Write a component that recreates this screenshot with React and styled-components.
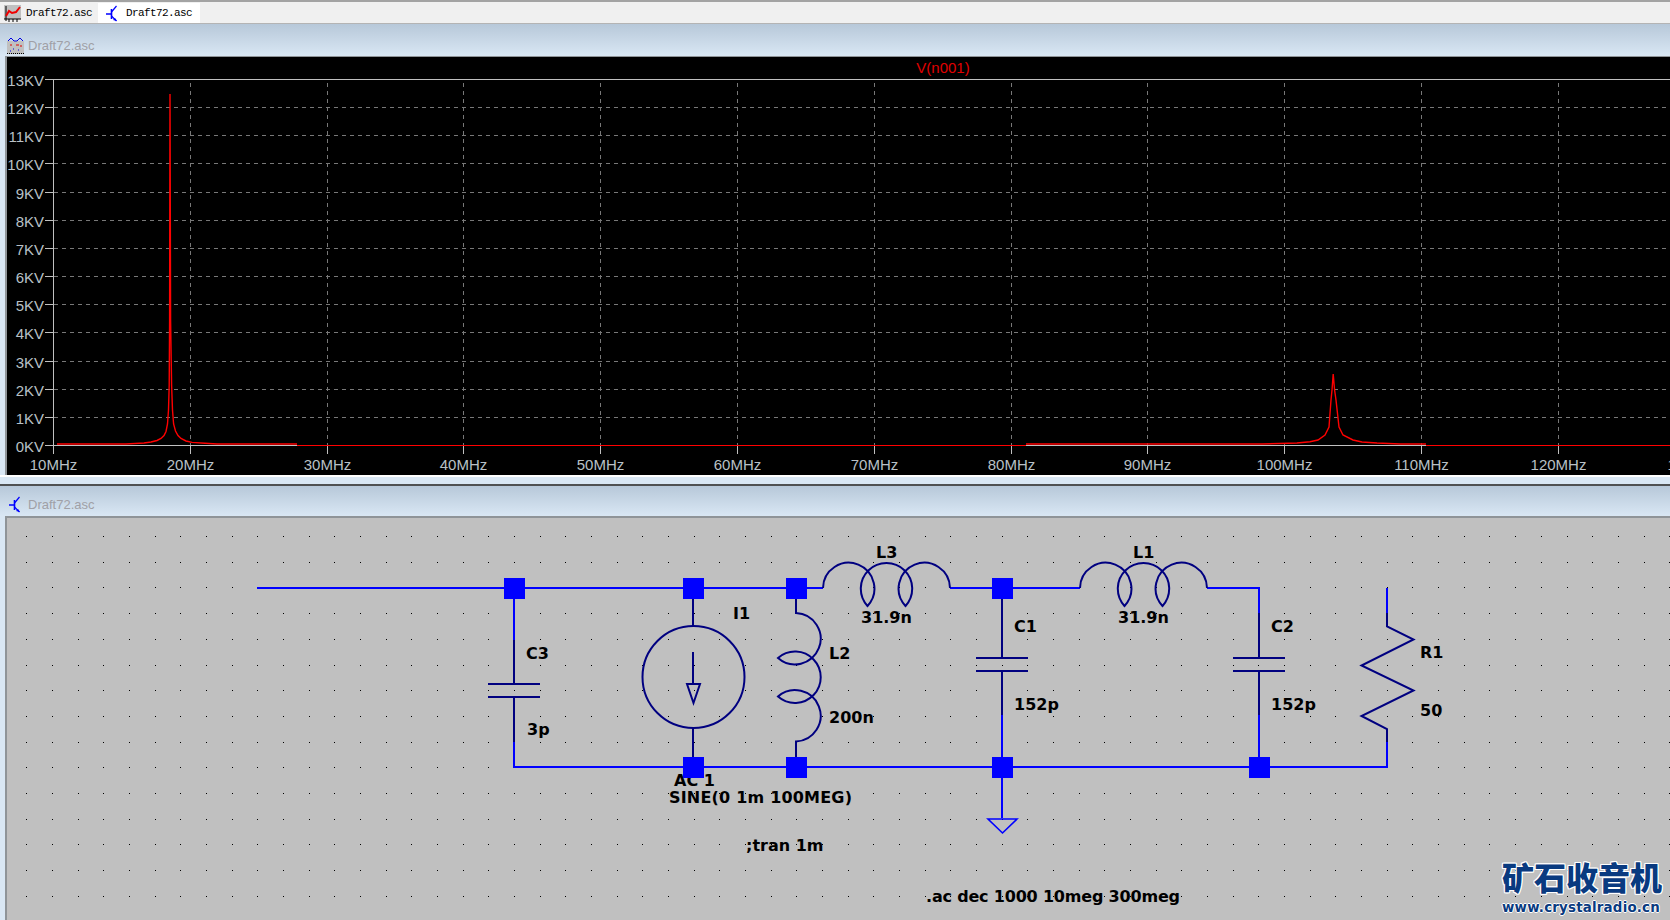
import React from 'react'
import styled, { createGlobalStyle } from 'styled-components'

const GlobalStyle = createGlobalStyle`
  html, body {
    margin: 0;
    padding: 0;
    height: 920px;
    overflow: hidden;
    background: #d9e7f4;
    font-family: "Liberation Sans", Arial, sans-serif;
  }
`

const Page = styled.div`
  display: flex;
  flex-direction: column;
  width: 1670px;
  height: 920px;
  overflow: hidden;
`

const TabBar = styled.div`
  display: flex;
  flex: none;
  align-items: stretch;
  box-sizing: border-box;
  height: 24px;
  padding-top: 1px;
  background: #f0f0f0;
  border-top: 2px solid #a3a3a3;
  border-bottom: 1px solid #b4b4b4;
`

const Tab = styled.div`
  display: flex;
  align-items: center;
  box-sizing: border-box;
  width: ${p => (p.$active ? '102px' : '98px')};
  padding-left: ${p => (p.$active ? '8px' : '4px')};
  gap: ${p => (p.$active ? '8px' : '5px')};
  background: ${p => (p.$active ? '#ffffff' : 'transparent')};
`

const TabLabel = styled.span`
  font: 11px "Liberation Mono", "DejaVu Sans Mono", monospace;
  letter-spacing: -0.6px;
  color: #000;
`

const Frame = styled.section`
  display: flex;
  flex-direction: column;
  flex: ${p => (p.$grow ? '1 1 0' : 'none')};
  min-height: 0;
  background: #d9e7f4;
`

const TitleBar = styled.div`
  display: flex;
  flex: none;
  align-items: center;
  box-sizing: border-box;
  gap: ${p => p.$gap}px;
  height: ${p => p.$height}px;
  padding: ${p => p.$pad};
  background: linear-gradient(#b7c8d9, #d9e7f4);
`

const TitleText = styled.span`
  font-size: 13px;
  color: #a0a0a6;
`

const Pane = styled.div`
  position: relative;
  box-sizing: border-box;
  height: ${p => p.$height}px;
  margin-left: 5px;
  border-left: 2px solid #8f9498;
  border-top: ${p => p.$top}px solid #8f9498;
  background: ${p => p.$bg};
  overflow: hidden;
`

const PlotFoot = styled.div`
  flex: none;
  box-sizing: border-box;
  height: 11px;
  background: #d9e7f4;
  border-top: 2px solid #ffffff;
  border-bottom: 2px solid #4f5152;
`

const Drawing = styled.svg`
  display: block;
`

const AxisLabel = styled.text`
  font: 15px "Liberation Sans", Arial, sans-serif;
  fill: #b9c0c6;
`

const TraceName = styled.text`
  font: 15px "Liberation Sans", Arial, sans-serif;
  fill: #e00000;
`

const NetLabel = styled.text`
  font: bold 16px "DejaVu Sans", Verdana, sans-serif;
  fill: #000;
`

const Logo = styled.div`
  position: absolute;
  right: 6px;
  bottom: 4px;
  width: 162px;
  color: #093a80;
`

const LogoMark = styled.div`
  font: 900 32px/32px "Noto Sans CJK SC", sans-serif;
  white-space: nowrap;
  text-shadow: 1px 0 #fff, -1px 0 #fff, 0 1px #fff, 0 -1px #fff, 1px 1px #fff, -1px -1px #fff, 1px -1px #fff, -1px 1px #fff;
`

const LogoUrl = styled.div`
  margin-top: 8px;
  font: bold 13.4px/16px "DejaVu Sans", Verdana, sans-serif;
  letter-spacing: 0.2px;
  white-space: nowrap;
  text-shadow: 1px 0 #fff, -1px 0 #fff, 0 1px #fff, 0 -1px #fff;
`

const PlotIcon = () => (
  <svg width="17" height="17" viewBox="0 0 17 17">
    <rect x="0" y="0" width="17" height="14" fill="#c0c0c0" />
    <path d="M2 1v15M0 14h17M5 14v3M9 14v3M13 14v3" stroke="#000" fill="none" />
    <path d="M2 11l3-5 3 2 4-1 4-5" stroke="#f00000" strokeWidth="2" fill="none" />
  </svg>
)

const WaveIcon = () => (
  <svg width="17" height="17" viewBox="0 0 17 17">
    <rect x="0" y="4" width="17" height="13" fill="#c0c0c0" />
    <path d="M1 4l3-3 3 3 3 0 3-3 3 3" stroke="#0000e0" fill="none" />
    <path d="M3 8h2M9 8h3M13 9h2" stroke="#e00000" />
    <path d="M6 12h1M11 13h1M3 14h1" stroke="#0000e0" />
    <path d="M0 16.5h17" stroke="#000" strokeDasharray="1 1" />
  </svg>
)

const TransistorIcon = () => (
  <svg width="12" height="17" viewBox="0 0 12 17">
    <path d="M0 9h5M5.5 4v10" stroke="#0000ff" strokeWidth="1.6" fill="none" />
    <path d="M5.5 7l5-6M5.5 11l5 5" stroke="#0000ff" strokeWidth="1.2" fill="none" />
    <path d="M11 16l-4-1 2-2z" fill="#0000ff" />
  </svg>
)

const volts = ['13KV', '12KV', '11KV', '10KV', '9KV', '8KV', '7KV', '6KV', '5KV', '4KV', '3KV', '2KV', '1KV', '0KV']
const freqs = ['10MHz', '20MHz', '30MHz', '40MHz', '50MHz', '60MHz', '70MHz', '80MHz', '90MHz', '100MHz', '110MHz', '120MHz', '130MHz']

const voltY = i => Math.round(79 + i * 28.15) + 0.5
const freqX = i => Math.round(53 + i * 136.8) + 0.5

const peakOne = [
  [57, 444], [126, 444], [144, 443], [151, 442], [157, 440.5], [161, 438.5], [164, 435.5], [166, 431.5],
  [167.5, 424], [168.5, 410], [169.2, 385], [169.6, 320], [170, 94], [170.6, 320], [171.6, 385], [172.5, 410],
  [173.6, 424], [175.5, 431], [178, 435.5], [181, 438.5], [186, 441], [192, 442.4], [205, 443.3], [217, 444], [297, 444]
]
const peakTwo = [
  [1026, 444], [1262, 444], [1297, 443], [1310, 441.8], [1318, 440], [1325, 435], [1329, 427], [1331, 400],
  [1332, 390], [1333.2, 374], [1334.6, 390], [1336, 400], [1339, 427], [1343, 435], [1353, 440], [1362, 442],
  [1377, 443], [1400, 444], [1426, 444]
]
const toPoints = list => list.map(p => p.join(',')).join(' ')

const PlotPane = () => (
  <Drawing width="1663" height="418" viewBox="7 57 1663 418">
    {volts.map((v, i) => (
      <g key={v}>
        {i > 0 && i < 13 && <path d={`M54 ${voltY(i)}H1670`} stroke="#787878" strokeDasharray="4 4" shapeRendering="crispEdges" />}
        <path d={`M45 ${voltY(i)}H53`} stroke="#c0c0c0" shapeRendering="crispEdges" />
        <AxisLabel x="44" y={voltY(i) + 6} textAnchor="end">{v}</AxisLabel>
      </g>
    ))}
    {freqs.map((f, i) => (
      <g key={f}>
        {i > 0 && <path d={`M${freqX(i)} 83V445`} stroke="#787878" strokeDasharray="4 4" shapeRendering="crispEdges" />}
        <path d={`M${freqX(i)} 445V454`} stroke="#c0c0c0" shapeRendering="crispEdges" />
        <AxisLabel x={freqX(i)} y="470" textAnchor="middle">{f}</AxisLabel>
      </g>
    ))}
    <path d="M53.5 79.5H1670M53.5 79V454M53 445.5H1670" stroke="#c0c0c0" fill="none" shapeRendering="crispEdges" />
    <path d="M297 445.5H1026M1426 445.5H1670" stroke="#ff0000" fill="none" shapeRendering="crispEdges" />
    <polyline points={toPoints(peakOne)} stroke="#ff0000" strokeWidth="1.4" fill="none" />
    <polyline points={toPoints(peakTwo)} stroke="#ff0000" strokeWidth="1.4" fill="none" />
    <TraceName x="943" y="73" textAnchor="middle">V(n001)</TraceName>
  </Drawing>
)

const dots = []
for (let row = 0; row < 16; row++) {
  for (let col = 0; col < 65; col++) {
    dots.push([Math.round(26.3 + col * 25.67), Math.round(536 + row * 25.7)])
  }
}

const junctions = [
  [504, 578], [683, 578], [786, 578], [992, 578],
  [683, 757], [786, 757], [992, 757], [1249, 757]
]

const blueWires = [
  'M257 588H823', 'M950 588H1080', 'M1207 588H1259V613', 'M514 588V640', 'M514 742V767H1387V742',
  'M1002 715V818', 'M1259 715V767', 'M1387 588V613'
].join('')

const parts = [
  // C3, C1, C2
  'M514 640V684M488 684H540M488 697H540M514 697V742',
  'M1002 599V658M976 658H1028M976 671H1028M1002 671V715',
  'M1259 613V658M1233 658H1285M1233 671H1285M1259 671V715',
  // I1 leads and arrow
  'M693 599V626M693 728V757M693 652V684M687 684H700L693.5 703Z',
  // L2
  'M796 599V613A25.7 25.7 0 1 1 778 658A25.7 25.7 0 1 1 778 696.5A25.7 25.7 0 1 1 796 741.5V757',
  // L3
  'M823 588A25.7 25.7 0 1 1 867.5 606A25.7 25.7 0 1 1 905.5 606A25.7 25.7 0 1 1 950 588',
  // L1
  'M1080 588A25.7 25.7 0 1 1 1124.5 606A25.7 25.7 0 1 1 1162.5 606A25.7 25.7 0 1 1 1207 588',
  // R1
  'M1387 613V626.5L1413.5 639.5L1361.5 665.5L1413.5 690.5L1361.5 716L1387 729V742'
].join('')

const labels = [
  ['C3', 526, 659], ['3p', 527, 735], ['I1', 733, 619], ['L2', 829, 659], ['200n', 829, 723],
  ['L3', 876, 558], ['31.9n', 861, 623], ['C1', 1014, 632], ['152p', 1014, 710],
  ['L1', 1133, 558], ['31.9n', 1118, 623], ['C2', 1271, 632], ['152p', 1271, 710],
  ['R1', 1420, 658], ['50', 1420, 716], ['AC 1', 674, 786], ['SINE(0 1m 100MEG)', 669, 803, 183],
  [';tran 1m', 746, 851], ['.ac dec 1000 10meg 300meg', 926, 902, 254]
]

const SchematicPane = () => (
  <Drawing width="1663" height="402" viewBox="7 518 1663 402">
    {dots.map(([x, y]) => (
      <rect key={`${x}-${y}`} x={x} y={y} width="1" height="1" fill="#000" />
    ))}
    {labels.map(([text, x, y, width]) => (
      <NetLabel key={`${text}-${x}`} x={x} y={y} textLength={width}>{text}</NetLabel>
    ))}
    <path d={blueWires} stroke="#0000ff" strokeWidth="2" fill="none" />
    <path d="M988 819H1017L1002.5 833Z" stroke="#0000ff" strokeWidth="1.6" fill="none" />
    <path d={parts} stroke="#000080" strokeWidth="2" fill="none" />
    <circle cx="693.5" cy="677" r="51" stroke="#000080" strokeWidth="2" fill="none" />
    {junctions.map(([x, y]) => (
      <rect key={`${x}-${y}`} x={x} y={y} width="21" height="21" fill="#0000ff" />
    ))}
  </Drawing>
)

const App = () => (
  <Page>
    <GlobalStyle />
    <TabBar>
      <Tab>
        <PlotIcon />
        <TabLabel>Draft72.asc</TabLabel>
      </Tab>
      <Tab $active>
        <TransistorIcon />
        <TabLabel>Draft72.asc</TabLabel>
      </Tab>
    </TabBar>
    <Frame>
      <TitleBar $height={32} $gap={4} $pad="10px 0 0 7px">
        <WaveIcon />
        <TitleText>Draft72.asc</TitleText>
      </TitleBar>
      <Pane $height={419} $top={1} $bg="#000">
        <PlotPane />
      </Pane>
      <PlotFoot />
    </Frame>
    <Frame $grow>
      <TitleBar $height={30} $gap={7} $pad="6px 0 0 9px">
        <TransistorIcon />
        <TitleText>Draft72.asc</TitleText>
      </TitleBar>
      <Pane $height={404} $top={2} $bg="#c0c0c0">
        <SchematicPane />
        <Logo>
          <LogoMark>矿石收音机</LogoMark>
          <LogoUrl>www.crystalradio.cn</LogoUrl>
        </Logo>
      </Pane>
    </Frame>
  </Page>
)

export default App
